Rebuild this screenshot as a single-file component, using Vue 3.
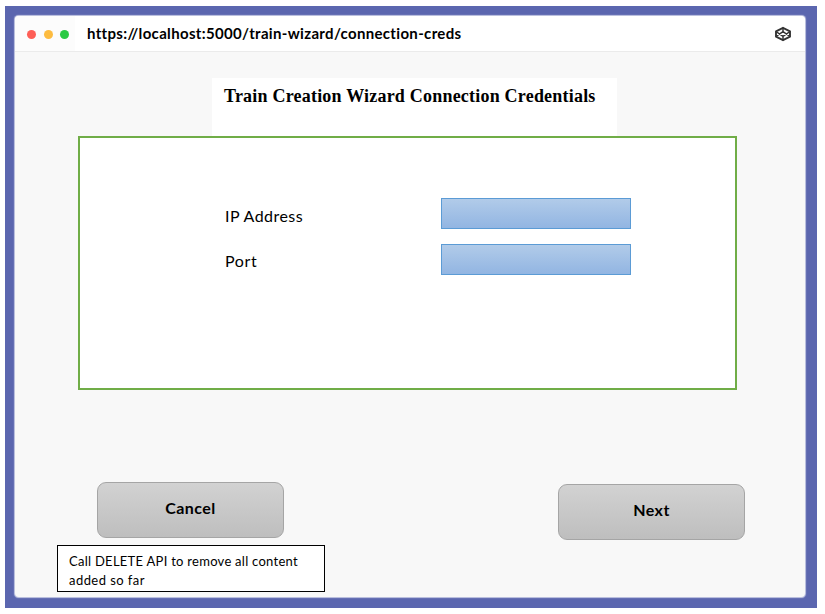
<script setup>
import { reactive } from 'vue'

const fields = reactive([
  { id: 'ip', label: 'IP Address', value: '' },
  { id: 'port', label: 'Port', value: '' }
])
</script>

<template>
  <div class="frame">
    <div class="window">
      <header class="bar">
        <div class="lights">
          <i class="light red"></i>
          <i class="light amber"></i>
          <i class="light green"></i>
        </div>
        <span class="url">https://localhost:5000/train-wizard/connection-creds</span>
        <svg class="logo" width="18" height="16" viewBox="0 0 18 16" fill="none" stroke="#333" stroke-linejoin="round">
          <path d="M9 1.8 16 5.3V10.7L9 14.2 2 10.7V5.3Z" stroke-width="1.9" />
          <path d="M2 5.5 9 10.4 16 5.5M2 10.5 9 5.6 16 10.5M9 1.8V5.6M9 10.4V14.2" stroke-width="1.5" />
        </svg>
      </header>
      <main class="page">
        <h1 class="title">Train Creation Wizard Connection Credentials</h1>
        <form class="panel">
          <div v-for="f in fields" :key="f.id" class="row">
            <label class="label" :class="f.id" :for="f.id">{{ f.label }}</label>
            <input :id="f.id" v-model="f.value" class="field" type="text" />
          </div>
        </form>
        <div class="actions">
          <div class="left">
            <button class="btn" type="button">Cancel</button>
            <p class="note"><span class="line">Call DELETE API to remove all content</span><span class="line second">added so far</span></p>
          </div>
          <button class="btn forward" type="button">Next</button>
        </div>
      </main>
    </div>
  </div>
</template>

<style>
html, body { background: #fff; overflow: hidden; }
</style>

<style scoped>
* { box-sizing: border-box; }
.frame {
  width: 812px;
  height: 602px;
  margin: 6px 0 0 5px;
  padding: 10px 12px 11px 10px;
  background: #5b66af;
  font-family: Lato, "Liberation Sans", sans-serif;
  color: #000;
  display: flow-root;
}
.window {
  width: 790px;
  height: 581px;
  border-radius: 4px;
  background: #f8f8f8;
  box-shadow: 0 0 1px 0.5px #c5c9e4;
  overflow: hidden;
}
.bar {
  height: 36px;
  display: flex;
  align-items: center;
  background: #fff;
  border-bottom: 1px solid #ebebeb;
}
.lights {
  width: 60px;
  height: 35px;
  padding: 1px 0 0 12px;
  display: flex;
  align-items: center;
  gap: 7.5px;
  background: #fcfcfc;
}
.light { width: 9px; height: 9px; border-radius: 50%; }
.red { background: #fe5f57; }
.amber { background: #fdbc40; }
.green { background: #2aca44; }
.url {
  margin-left: 12px;
  padding-bottom: 2px;
  font-size: 15px;
  line-height: 20px;
  font-weight: 700;
  letter-spacing: 0.33px;
  white-space: nowrap;
}
.logo { margin: 0 13px 0 auto; }
.page { padding-top: 26px; }
.title {
  width: 405px;
  height: 58px;
  margin: 0 0 0 197px;
  padding: 8px 0 0 12px;
  background: #fff;
  font: 700 18px/21px "Liberation Serif", serif;
  letter-spacing: 0.21px;
  white-space: nowrap;
}
.panel {
  width: 659px;
  height: 254px;
  margin-left: 63px;
  padding: 60px 0 0 145px;
  border: 2px solid #70ad47;
  background: #fff;
  display: flex;
  flex-direction: column;
  gap: 15px;
}
.row { display: flex; height: 31px; }
.label {
  width: 216px;
  padding-top: 8px;
  font-size: 16px;
  line-height: 20px;
  letter-spacing: 0.45px;
}
.label.port { padding-top: 7px; letter-spacing: 0.6px; }
.field {
  width: 190px;
  height: 31px;
  padding: 0 8px;
  border: 1px solid #5b9bd5;
  border-radius: 0;
  background: linear-gradient(#b1cbe9, #92b5e2);
  outline: none;
}
.actions {
  display: flex;
  padding: 92px 0 0 42px;
  align-items: flex-start;
}
.left { width: 268px; }
.btn {
  display: block;
  width: 187px;
  height: 56px;
  padding: 0 0 5px;
  border: 1px solid #a5a5a5;
  border-radius: 9px;
  background: linear-gradient(#d2d2d2, #bebebe);
  color: #000;
  font: 700 16px/20px Lato, "Liberation Sans", sans-serif;
  letter-spacing: 0.45px;
}
.left .btn { margin-left: 40px; }
.forward { margin: 2px 0 0 233px; }
.note {
  width: 268px;
  height: 47px;
  margin: 7px 0 0;
  padding: 6px 0 0 11px;
  border: 1px solid #000;
  background: #fff;
  font-size: 13px;
  line-height: 19px;
  letter-spacing: 0.27px;
  white-space: nowrap;
}
.line { display: block; }
.second { letter-spacing: 0.45px; }
</style>
